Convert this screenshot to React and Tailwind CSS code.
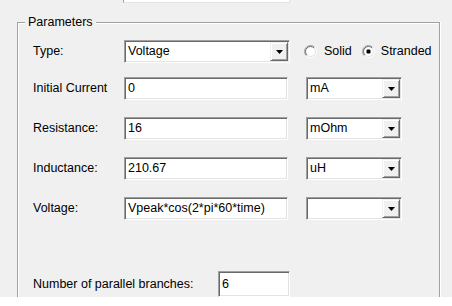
import React from "react";

const sunken =
  "border border-t-[#a0a0a0] border-l-[#a0a0a0] border-b-white border-r-white shadow-[inset_1px_1px_0_#696969,inset_-1px_-1px_0_#e3e3e3] bg-white";

function Arrow() {
  return (
    <svg width="7" height="4" viewBox="0 0 7 4">
      <path d="M0 0H7L3.5 4Z" fill="#000" />
    </svg>
  );
}

function DropBtn() {
  return (
    <div className="w-[18px] h-full flex items-center justify-center bg-[#f0f0f0] border border-t-[#f0f0f0] border-l-[#f0f0f0] border-b-[#696969] border-r-[#696969] shadow-[inset_1px_1px_0_#fff,inset_-1px_-1px_0_#a0a0a0]">
      <div className="mt-[1px]">
        <Arrow />
      </div>
    </div>
  );
}

function Combo({ value, w }) {
  return (
    <div className={`${sunken} ${w} h-[23px] flex items-stretch p-[1px]`}>
      <div className="flex-1 flex items-center pl-[2px] overflow-hidden whitespace-nowrap">{value}</div>
      <DropBtn />
    </div>
  );
}

function TextBox({ value, w, h = "h-[23px]" }) {
  return (
    <div className={`${sunken} ${w} ${h} flex items-center pl-[3px] whitespace-nowrap overflow-hidden`}>
      {value}
    </div>
  );
}

function Radio({ checked }) {
  return (
    <svg width="13" height="13" viewBox="0 0 13 13">
      <circle cx="6.5" cy="6.5" r="5" fill="#fff" />
      <path d="M2.257 10.743A6 6 0 0 1 10.743 2.257" fill="none" stroke="#a0a0a0" strokeWidth="1" />
      <path d="M2.964 10.036A5 5 0 0 1 10.036 2.964" fill="none" stroke="#696969" strokeWidth="1" />
      <path d="M10.743 2.257A6 6 0 0 1 2.257 10.743" fill="none" stroke="#ffffff" strokeWidth="1" />
      <path d="M10.036 2.964A5 5 0 0 1 2.964 10.036" fill="none" stroke="#e3e3e3" strokeWidth="1" />
      {checked && <rect x="4.5" y="4.5" width="4" height="4" rx="1.2" fill="#000" />}
    </svg>
  );
}

function Row({ label, children, mt }) {
  return (
    <div className={`flex items-center h-[23px] ${mt}`}>
      <div className="w-[91px] whitespace-nowrap">{label}</div>
      {children}
    </div>
  );
}

export default function App() {
  return (
    <div
      className="w-[452px] h-[306px] bg-[#f0f0f0] overflow-hidden flex flex-col text-black text-[12.5px] leading-none"
      style={{ fontFamily: '"Liberation Sans", Arial, sans-serif' }}
    >
      <div className="h-[22px] shrink-0">
        <div className="ml-[123px] w-[167px] h-[3px] bg-white border-l border-b border-r border-l-[#a0a0a0] border-r-[#e3e3e3] border-b-[#e3e3e3]" />
      </div>
      <div className="relative ml-[17px] w-[423px] h-[275px] shrink-0 border border-b-0 border-[#a0a0a0] shadow-[1px_0_0_#fff,inset_1px_1px_0_#fff] overflow-hidden-x">
        <div className="absolute left-[7px] top-[-8px] px-[3px] bg-[#f0f0f0] h-[15px] flex items-center">Parameters</div>
        <div className="h-full overflow-hidden pl-[15px] pt-[17px]">
          <Row label="Type:">
            <Combo value="Voltage" w="w-[166px]" />
            <div className="ml-[14px] flex items-center">
              <Radio />
              <span className="ml-[7px]">Solid</span>
              <span className="ml-[10px] flex items-center">
                <Radio checked />
              </span>
              <span className="ml-[6px]">Stranded</span>
            </div>
          </Row>
          <Row label="Initial Current" mt="mt-[14px]">
            <TextBox value="0" w="w-[164px]" />
            <div className="ml-[18px]">
              <Combo value="mA" w="w-[96px]" />
            </div>
          </Row>
          <Row label="Resistance:" mt="mt-[17px]">
            <TextBox value="16" w="w-[164px]" />
            <div className="ml-[18px]">
              <Combo value="mOhm" w="w-[96px]" />
            </div>
          </Row>
          <Row label="Inductance:" mt="mt-[17px]">
            <TextBox value="210.67" w="w-[164px]" />
            <div className="ml-[18px]">
              <Combo value="uH" w="w-[96px]" />
            </div>
          </Row>
          <Row label="Voltage:" mt="mt-[17px]">
            <TextBox value="Vpeak*cos(2*pi*60*time)" w="w-[164px]" />
            <div className="ml-[18px]">
              <Combo value="" w="w-[96px]" />
            </div>
          </Row>
          <div className="flex items-start mt-[51px]">
            <div className="w-[185px] whitespace-nowrap pt-[7px]">Number of parallel branches:</div>
            <TextBox value="6" w="w-[72px]" h="h-[26px]" />
          </div>
        </div>
      </div>
      <div className="flex-1 bg-white" />
    </div>
  );
}
